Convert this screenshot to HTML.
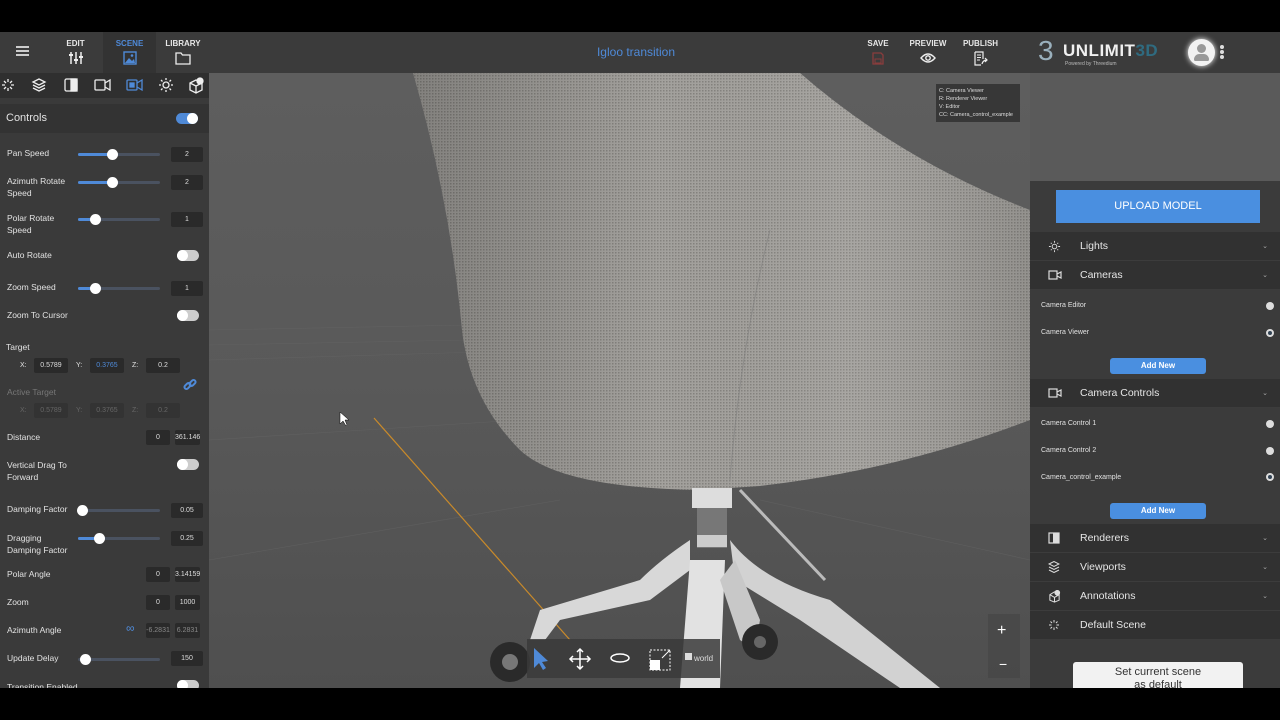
<!DOCTYPE html>
<html><head><meta charset="utf-8"><style>
*{box-sizing:border-box;margin:0;padding:0}
body{width:1280px;height:720px;background:#000;font-family:"Liberation Sans",sans-serif;position:relative;overflow:hidden;color:#ddd}
.abs{position:absolute}
#top{left:0;top:32px;width:1280px;height:41px;background:#3b3b3b}
.tab{position:absolute;top:0;height:41px;font-size:8px;font-weight:bold;color:#e8e8e8;text-align:center}
#left{left:0;top:73px;width:209px;height:615px;background:#3a3a3a;overflow:hidden}
#icons{left:0;top:0;width:209px;height:25px;background:#2f2f2f}
.lbl{position:absolute;font-size:9px;color:#e2e2e2;line-height:12px}
.box{position:absolute;background:#2a2a2a;color:#ddd;font-size:7px;text-align:center;line-height:15px;height:15px;border-radius:2px}
.sl{position:absolute;height:3px;background:#4a5260;border-radius:2px;width:82px;left:78px}
.sl i{position:absolute;left:0;top:0;height:3px;background:#4f8ad8;border-radius:2px}
.sl b{position:absolute;top:-4px;width:11px;height:11px;border-radius:50%;background:#fff;margin-left:-5px}
.tg{position:absolute;left:177px;width:22px;height:11px;border-radius:6px;background:#ccc}
.tg:after{content:"";position:absolute;left:0;top:0;width:11px;height:11px;border-radius:50%;background:#fff}
#view{left:209px;top:73px;width:821px;height:615px;background:#5b5b5b;overflow:hidden}
#right{left:1030px;top:73px;width:250px;height:615px;background:#3b3b3b;overflow:hidden}
.sec{position:absolute;left:0;width:250px;height:29px;background:#313131;border-bottom:1px solid #3c3c3c;font-size:10.5px;color:#e6e6e6;line-height:29px}
.sec span{position:absolute;left:50px}
.sec em{position:absolute;right:12px;font-style:normal;font-size:7px;color:#aaa}
.sec svg{position:absolute;left:18px;top:8px}
.it{position:absolute;left:11px;font-size:7px;color:#e0e0e0}
.rd{position:absolute;left:236px;width:8px;height:8px;border-radius:50%;background:#ddd}
.btn{position:absolute;left:80px;width:96px;height:16px;background:#4a8fe0;border-radius:3px;color:#fff;font-size:8px;font-weight:bold;text-align:center;line-height:16px}
</style></head><body>
<div id="top" class="abs">
 <div class="abs" style="left:16px;top:14px;width:13px;height:1.5px;background:#ccc;box-shadow:0 4px 0 #ccc,0 8px 0 #ccc"></div>
 <div class="tab" style="left:58px;width:35px;padding-top:7px">EDIT<br><svg width="16" height="14" viewBox="0 0 16 14" style="margin-top:3px"><g stroke="#eee" stroke-width="1.5"><line x1="3" y1="1" x2="3" y2="13"/><line x1="8" y1="1" x2="8" y2="13"/><line x1="13" y1="1" x2="13" y2="13"/></g><g fill="#eee"><rect x="1" y="3" width="4" height="2"/><rect x="6" y="8" width="4" height="2"/><rect x="11" y="5" width="4" height="2"/></g></svg></div>
 <div class="tab" style="left:103px;width:53px;background:#333;color:#4f8ad8;padding-top:7px">SCENE<br><svg width="14" height="14" viewBox="0 0 14 14" style="margin-top:3px"><rect x="1" y="1" width="12" height="12" fill="none" stroke="#4f8ad8" stroke-width="1.4"/><path d="M2 12 L6 7 L9 10 L11 8 L12 12Z" fill="#4f8ad8"/><circle cx="9" cy="4.5" r="1.3" fill="#4f8ad8"/></svg></div>
 <div class="tab" style="left:160px;width:46px;padding-top:7px">LIBRARY<br><svg width="16" height="14" viewBox="0 0 16 14" style="margin-top:3px"><path d="M1 2 H6 L7.5 4 H15 V13 H1Z" fill="none" stroke="#eee" stroke-width="1.3"/></svg></div>
 <div class="abs" style="left:560px;top:13px;width:152px;text-align:center;font-size:12px;color:#4f8ad8">Igloo transition</div>
 <div class="tab" style="left:862px;width:32px;padding-top:7px">SAVE<br><svg width="12" height="13" viewBox="0 0 12 13" style="margin-top:4px"><path d="M1 1H9L11 3V12H1Z" fill="none" stroke="#8a3c3c" stroke-width="1.3"/><rect x="3" y="7" width="6" height="4" fill="none" stroke="#8a3c3c"/></svg></div>
 <div class="tab" style="left:904px;width:48px;padding-top:7px">PREVIEW<br><svg width="16" height="12" viewBox="0 0 16 12" style="margin-top:4px"><path d="M1 6 Q8 -2 15 6 Q8 14 1 6Z" fill="none" stroke="#eee" stroke-width="1.4"/><circle cx="8" cy="6" r="2.2" fill="none" stroke="#eee" stroke-width="1.4"/></svg></div>
 <div class="tab" style="left:958px;width:45px;padding-top:7px">PUBLISH<br><svg width="16" height="15" viewBox="0 0 16 15" style="margin-top:3px"><path d="M2 1H10V8M2 1V14H8" fill="none" stroke="#eee" stroke-width="1.2"/><path d="M4 4H8M4 6.5H8M4 9H7" stroke="#eee"/><path d="M9 13 Q10 9 14 9 M12 7 L14 9 L12 11" fill="none" stroke="#eee" stroke-width="1.2"/></svg></div>
 <div class="abs" style="left:1038px;top:4px;font-size:28px;color:#9ab0bd;line-height:30px">3</div>
 <div class="abs" style="left:1063px;top:9px;font-size:17px;color:#f0f0f0;font-weight:bold;letter-spacing:0.5px">UNLIMIT<span style="color:#2f6b80">3D</span></div>
 <div class="abs" style="left:1065px;top:29px;font-size:5px;color:#bbb">Powered by Threedium</div>
 <div class="abs" style="left:1188px;top:7px;width:27px;height:27px;border-radius:50%;background:#f2f2f2;box-shadow:0 0 6px #fff"><div class="abs" style="left:9px;top:5px;width:9px;height:9px;border-radius:50%;background:#999"></div><div class="abs" style="left:6px;top:15px;width:15px;height:7px;border-radius:7px 7px 2px 2px;background:#999"></div></div>
 <div class="abs" style="left:1220px;top:13px;width:4px;height:4px;border-radius:50%;background:#ddd;box-shadow:0 5px 0 #ddd,0 10px 0 #ddd"></div>
</div>

<div id="left" class="abs">
 <div id="icons" class="abs">
  <svg class="abs" style="left:0;top:4px" width="209" height="17" viewBox="0 0 209 17" fill="none" stroke="#eee" stroke-width="1.3">
   <g transform="translate(8,8)"><path d="M0-6V-3M0 3V6M-6 0H-3M3 0H6M-4-4L-2-2M2 2L4 4M-4 4L-2 2M2-2L4-4"/></g>
   <g transform="translate(39,8)"><path d="M-6-3L0-6L6-3L0 0Z M-6 0L0 3L6 0 M-6 3L0 6L6 3"/></g>
   <rect x="65" y="2" width="12" height="12" rx="1.5"/><rect x="71" y="2" width="6" height="12" fill="#eee"/>
   <rect x="95" y="3" width="10" height="10" rx="1"/><path d="M105 6L110 3V13L105 10"/>
   <g stroke="#4f8ad8"><rect x="127" y="3" width="10" height="10" rx="1"/><path d="M137 6L142 3V13L137 10"/><rect x="130" y="6" width="4" height="4" fill="#4f8ad8"/></g>
   <g transform="translate(166,8)"><circle r="3"/><path d="M0-7V-5M0 5V7M-7 0H-5M5 0H7M-5-5L-3.5-3.5M3.5 3.5L5 5M-5 5L-3.5 3.5M3.5-3.5L5-5"/></g>
   <g transform="translate(196,9)"><path d="M-6-3L0-6L6-3V4L0 7L-6 4Z M-6-3L0 0L6-3 M0 0V7"/><circle cx="4" cy="-5" r="3" fill="#eee"/></g>
  </svg>
 </div>
 <div class="abs" style="left:0;top:31px;width:209px;height:29px;background:#333"></div>
 <div class="lbl" style="left:6px;top:39px;font-size:11px">Controls</div>
 <div class="abs" style="left:176px;top:40px;width:22px;height:11px;border-radius:6px;background:#4f8ad8"><div class="abs" style="left:11px;top:0;width:11px;height:11px;border-radius:50%;background:#fff"></div></div>

 <div class="lbl" style="left:7px;top:74px;font-size:8.5px">Pan Speed</div><div class="sl" style="top:80px"><i style="width:34px"></i><b style="left:34px"></b></div><div class="box" style="left:171px;top:74px;width:32px">2</div>
 <div class="lbl" style="left:7px;top:102px;font-size:8.5px">Azimuth Rotate<br>Speed</div><div class="sl" style="top:108px"><i style="width:34px"></i><b style="left:34px"></b></div><div class="box" style="left:171px;top:102px;width:32px">2</div>
 <div class="lbl" style="left:7px;top:139px;font-size:8.5px">Polar Rotate<br>Speed</div><div class="sl" style="top:145px"><i style="width:17px"></i><b style="left:17px"></b></div><div class="box" style="left:171px;top:139px;width:32px">1</div>
 <div class="lbl" style="left:7px;top:176px;font-size:8.5px">Auto Rotate</div><div class="tg" style="top:177px"></div>
 <div class="lbl" style="left:7px;top:208px;font-size:8.5px">Zoom Speed</div><div class="sl" style="top:214px"><i style="width:17px"></i><b style="left:17px"></b></div><div class="box" style="left:171px;top:208px;width:32px">1</div>
 <div class="lbl" style="left:7px;top:236px;font-size:8.5px">Zoom To Cursor</div><div class="tg" style="top:237px"></div>

 <div class="lbl" style="left:6px;top:268px;font-size:8.5px">Target</div>
 <div class="lbl" style="left:20px;top:287px;font-size:7px">X:</div><div class="box" style="left:34px;top:285px;width:34px">0.5789</div>
 <div class="lbl" style="left:76px;top:287px;font-size:7px">Y:</div><div class="box" style="left:90px;top:285px;width:34px;color:#4f8ad8">0.3765</div>
 <div class="lbl" style="left:132px;top:287px;font-size:7px">Z:</div><div class="box" style="left:146px;top:285px;width:34px">0.2</div>
 <div class="lbl" style="left:7px;top:313px;font-size:8.5px;color:#777">Active Target</div>
 <svg class="abs" style="left:183px;top:305px" width="14" height="14" viewBox="0 0 14 14" fill="none" stroke="#4f8ad8" stroke-width="2"><rect x="1" y="6" width="7" height="4" rx="2" transform="rotate(-45 4.5 8)"/><rect x="6" y="3" width="7" height="4" rx="2" transform="rotate(-45 9.5 5)"/></svg>
 <div class="lbl" style="left:20px;top:332px;font-size:7px;color:#666">X:</div><div class="box" style="left:34px;top:330px;width:34px;color:#666;background:#333">0.5789</div>
 <div class="lbl" style="left:76px;top:332px;font-size:7px;color:#666">Y:</div><div class="box" style="left:90px;top:330px;width:34px;color:#666;background:#333">0.3765</div>
 <div class="lbl" style="left:132px;top:332px;font-size:7px;color:#666">Z:</div><div class="box" style="left:146px;top:330px;width:34px;color:#666;background:#333">0.2</div>
 <div class="lbl" style="left:7px;top:358px;font-size:8.5px">Distance</div><div class="box" style="left:146px;top:357px;width:24px">0</div><div class="box" style="left:175px;top:357px;width:25px">361.146</div>
 <div class="lbl" style="left:7px;top:386px;font-size:8.5px">Vertical Drag To<br>Forward</div><div class="tg" style="top:386px"></div>
 <div class="lbl" style="left:7px;top:430px;font-size:8.5px">Damping Factor</div><div class="sl" style="top:436px"><b style="left:4px"></b></div><div class="box" style="left:171px;top:430px;width:32px">0.05</div>
 <div class="lbl" style="left:7px;top:459px;font-size:8.5px">Dragging<br>Damping Factor</div><div class="sl" style="top:464px"><i style="width:21px"></i><b style="left:21px"></b></div><div class="box" style="left:171px;top:458px;width:32px">0.25</div>
 <div class="lbl" style="left:7px;top:495px;font-size:8.5px">Polar Angle</div><div class="box" style="left:146px;top:494px;width:24px">0</div><div class="box" style="left:175px;top:494px;width:25px">3.14159</div>
 <div class="lbl" style="left:7px;top:523px;font-size:8.5px">Zoom</div><div class="box" style="left:146px;top:522px;width:24px">0</div><div class="box" style="left:175px;top:522px;width:25px">1000</div>
 <div class="lbl" style="left:7px;top:551px;font-size:8.5px">Azimuth Angle</div><div class="lbl" style="left:126px;top:549px;font-size:12px;color:#4f8ad8">∞</div><div class="box" style="left:146px;top:550px;width:24px;color:#888">-6.2831</div><div class="box" style="left:175px;top:550px;width:25px;color:#888">6.2831</div>
 <div class="lbl" style="left:7px;top:579px;font-size:8.5px">Update Delay</div><div class="sl" style="top:585px"><b style="left:7px"></b></div><div class="box" style="left:171px;top:578px;width:32px">150</div>
 <div class="lbl" style="left:7px;top:608px;font-size:8.5px">Transition Enabled</div><div class="tg" style="top:607px"></div>
</div>

<div id="view" class="abs">
 <svg width="821" height="615" viewBox="209 73 821 615">
  <defs>
   <linearGradient id="bg" x1="0" y1="0" x2="0" y2="1"><stop offset="0" stop-color="#5e5e5e"/><stop offset="0.5" stop-color="#595959"/><stop offset="1" stop-color="#4f4f4f"/></linearGradient>
   <pattern id="fab" width="3" height="3" patternUnits="userSpaceOnUse"><rect width="3" height="3" fill="#a3a19d"/><rect width="1.5" height="1.5" fill="#84827e"/></pattern>
   <linearGradient id="sh" x1="0" y1="0" x2="1" y2="0"><stop offset="0" stop-color="#000" stop-opacity="0.2"/><stop offset="0.4" stop-color="#000" stop-opacity="0"/><stop offset="0.7" stop-color="#fff" stop-opacity="0.05"/><stop offset="1" stop-color="#000" stop-opacity="0.1"/></linearGradient>
  </defs>
  <rect x="209" y="73" width="821" height="615" fill="url(#bg)"/>
  <g stroke="#666" stroke-width="0.6" opacity="0.6"><line x1="209" y1="330" x2="470" y2="325"/><line x1="209" y1="345" x2="470" y2="340"/><line x1="209" y1="360" x2="480" y2="352"/><line x1="209" y1="440" x2="520" y2="420"/><line x1="209" y1="560" x2="560" y2="500"/><line x1="760" y1="500" x2="1030" y2="560"/></g>
  <line x1="374" y1="418" x2="570" y2="640" stroke="#c98a2a" stroke-width="1.2"/>
  <path d="M413 73 L800 73 Q900 160 1030 210 L1030 420 Q900 470 760 486 L700 490 Q560 488 520 450 Q470 400 462 330 Q450 200 413 73Z" fill="url(#fab)"/>
  <path d="M413 73 L800 73 Q900 160 1030 210 L1030 420 Q900 470 760 486 L700 490 Q560 488 520 450 Q470 400 462 330 Q450 200 413 73Z" fill="url(#sh)"/>
  <path d="M730 480 Q740 350 770 230" stroke="#777" stroke-width="1" fill="none" opacity="0.5"/>
  <rect x="692" y="488" width="40" height="20" fill="#ddd"/>
  <rect x="697" y="508" width="30" height="40" fill="#777"/>
  <rect x="697" y="535" width="30" height="12" fill="#ccc"/>
  <path d="M690 540 Q660 560 640 580 L540 610 L530 640 L545 640 L560 620 L650 600 L690 570Z" fill="#d8d8d8"/>
  <path d="M730 540 Q760 580 830 600 L940 688 L900 688 L800 620 L735 580Z" fill="#d2d2d2"/>
  <path d="M690 560 L680 688 L720 688 L725 560Z" fill="#e2e2e2"/>
  <path d="M735 560 L760 620 L755 650 L740 640 L720 580Z" fill="#c8c8c8"/>
  <line x1="740" y1="490" x2="825" y2="580" stroke="#bbb" stroke-width="3"/>
  <circle cx="510" cy="662" r="20" fill="#2a2a2a"/><circle cx="510" cy="662" r="8" fill="#777"/><circle cx="760" cy="642" r="18" fill="#2a2a2a"/><circle cx="760" cy="642" r="6" fill="#666"/>
  <rect x="527" y="639" width="193" height="39" fill="#3a3a3a" opacity="0.85"/>
  <path d="M534 648 L534 668 L539 663 L543 670 L546 668 L542 662 L548 661Z" fill="#4f8ad8"/>
  <g stroke="#fff" stroke-width="1.5" fill="none"><path d="M580 650V668M571 659H589"/><path d="M577 652L580 649L583 652M577 666L580 669L583 666M573 656L570 659L573 662M587 656L590 659L587 662"/><ellipse cx="620" cy="658" rx="9" ry="4"/></g>
  <rect x="650" y="650" width="20" height="20" fill="none" stroke="#fff" stroke-dasharray="2 1.5"/><rect x="650" y="660" width="10" height="10" fill="#fff"/><line x1="662" y1="658" x2="670" y2="650" stroke="#fff"/>
  <rect x="685" y="653" width="7" height="7" fill="#ddd"/><text x="694" y="661" font-size="8" fill="#ddd" font-family="Liberation Sans">world</text>
  <rect x="988" y="614" width="32" height="64" fill="#444" opacity="0.6"/>
  <text x="997" y="635" font-size="16" fill="#fff" font-family="Liberation Sans">+</text><text x="999" y="669" font-size="14" fill="#fff" font-family="Liberation Sans">−</text>
  <path d="M340 412 V424 L343 421 L346 426 L347 425 L345 420 L349 420Z" fill="#fff" stroke="#000" stroke-width="0.5"/>
  <rect x="936" y="84" width="84" height="38" fill="#333" opacity="0.9"/>
  <text font-size="5.5" fill="#ddd" font-family="Liberation Sans"><tspan x="939" y="92">C: Camera Viewer</tspan><tspan x="939" y="100">R: Renderer Viewer</tspan><tspan x="939" y="108">V: Editor</tspan><tspan x="939" y="116">CC: Camera_control_example</tspan></text>
 </svg>
</div>

<div id="right" class="abs">
 <div class="abs" style="left:0;top:0;width:250px;height:108px;background:#5a5a5a"></div>
 <div class="abs" style="left:26px;top:117px;width:204px;height:33px;background:#4a8fe0;color:#fff;font-size:11px;text-align:center;line-height:33px">UPLOAD MODEL</div>
 <div class="sec" style="top:159px"><svg width="13" height="13" viewBox="-7 -7 14 14" fill="none" stroke="#ddd" stroke-width="1"><circle r="2.5"/><path d="M0-6V-4M0 4V6M-6 0H-4M4 0H6M-4-4L-3-3M3 3L4 4M-4 4L-3 3M3-3L4-4"/></svg><span>Lights</span><em>⌄</em></div>
 <div class="sec" style="top:188px"><svg width="14" height="12" viewBox="0 0 14 12" fill="none" stroke="#ddd" stroke-width="1.2"><rect x="1" y="2" width="8" height="8"/><path d="M9 5L13 3V9L9 7"/></svg><span>Cameras</span><em>⌄</em></div>
 <div class="it" style="top:229px">Camera Editor</div><div class="rd" style="top:229px"></div>
 <div class="it" style="top:256px">Camera Viewer</div><div class="rd" style="top:256px;background:#345;border:2px solid #ddd"></div>
 <div class="btn" style="top:285px">Add New</div>
 <div class="sec" style="top:306px"><svg width="14" height="12" viewBox="0 0 14 12" fill="none" stroke="#ddd" stroke-width="1.2"><rect x="1" y="2" width="8" height="8"/><path d="M9 5L13 3V9L9 7"/></svg><span>Camera Controls</span><em>⌄</em></div>
 <div class="it" style="top:347px">Camera Control 1</div><div class="rd" style="top:347px"></div>
 <div class="it" style="top:374px">Camera Control 2</div><div class="rd" style="top:374px"></div>
 <div class="it" style="top:401px">Camera_control_example</div><div class="rd" style="top:400px;background:#345;border:2px solid #ddd"></div>
 <div class="btn" style="top:430px">Add New</div>
 <div class="sec" style="top:451px"><svg width="12" height="12" viewBox="0 0 12 12"><rect x="1" y="1" width="10" height="10" fill="none" stroke="#ddd" stroke-width="1.2"/><rect x="5" y="1" width="6" height="10" fill="#ddd"/></svg><span>Renderers</span><em>⌄</em></div>
 <div class="sec" style="top:480px"><svg width="12" height="12" viewBox="-6 -6 12 12" fill="none" stroke="#ddd" stroke-width="1"><path d="M-5-3L0-5.5L5-3L0-0.5Z M-5 0L0 2.5L5 0 M-5 3L0 5.5L5 3"/></svg><span>Viewports</span><em>⌄</em></div>
 <div class="sec" style="top:509px"><svg width="13" height="13" viewBox="-7 -7 14 14" fill="none" stroke="#ddd" stroke-width="1.1"><path d="M-5-2L0-5L5-2V4L0 6L-5 4Z M-5-2L0 1L5-2 M0 1V6"/><circle cx="3" cy="-4" r="2.5" fill="#ddd"/></svg><span>Annotations</span><em>⌄</em></div>
 <div class="sec" style="top:538px"><svg width="12" height="12" viewBox="-6 -6 12 12" fill="none" stroke="#ddd" stroke-width="1"><path d="M0-5V-2.5M0 2.5V5M-5 0H-2.5M2.5 0H5M-3.5-3.5L-2-2M2 2L3.5 3.5M-3.5 3.5L-2 2M2-2L3.5-3.5"/></svg><span>Default Scene</span></div>
 <div class="abs" style="left:43px;top:589px;width:170px;height:30px;background:#f2f2f2;border-radius:3px;color:#333;font-size:11px;text-align:center;line-height:13px;padding-top:4px">Set current scene<br>as default</div>
</div>
</body></html>
